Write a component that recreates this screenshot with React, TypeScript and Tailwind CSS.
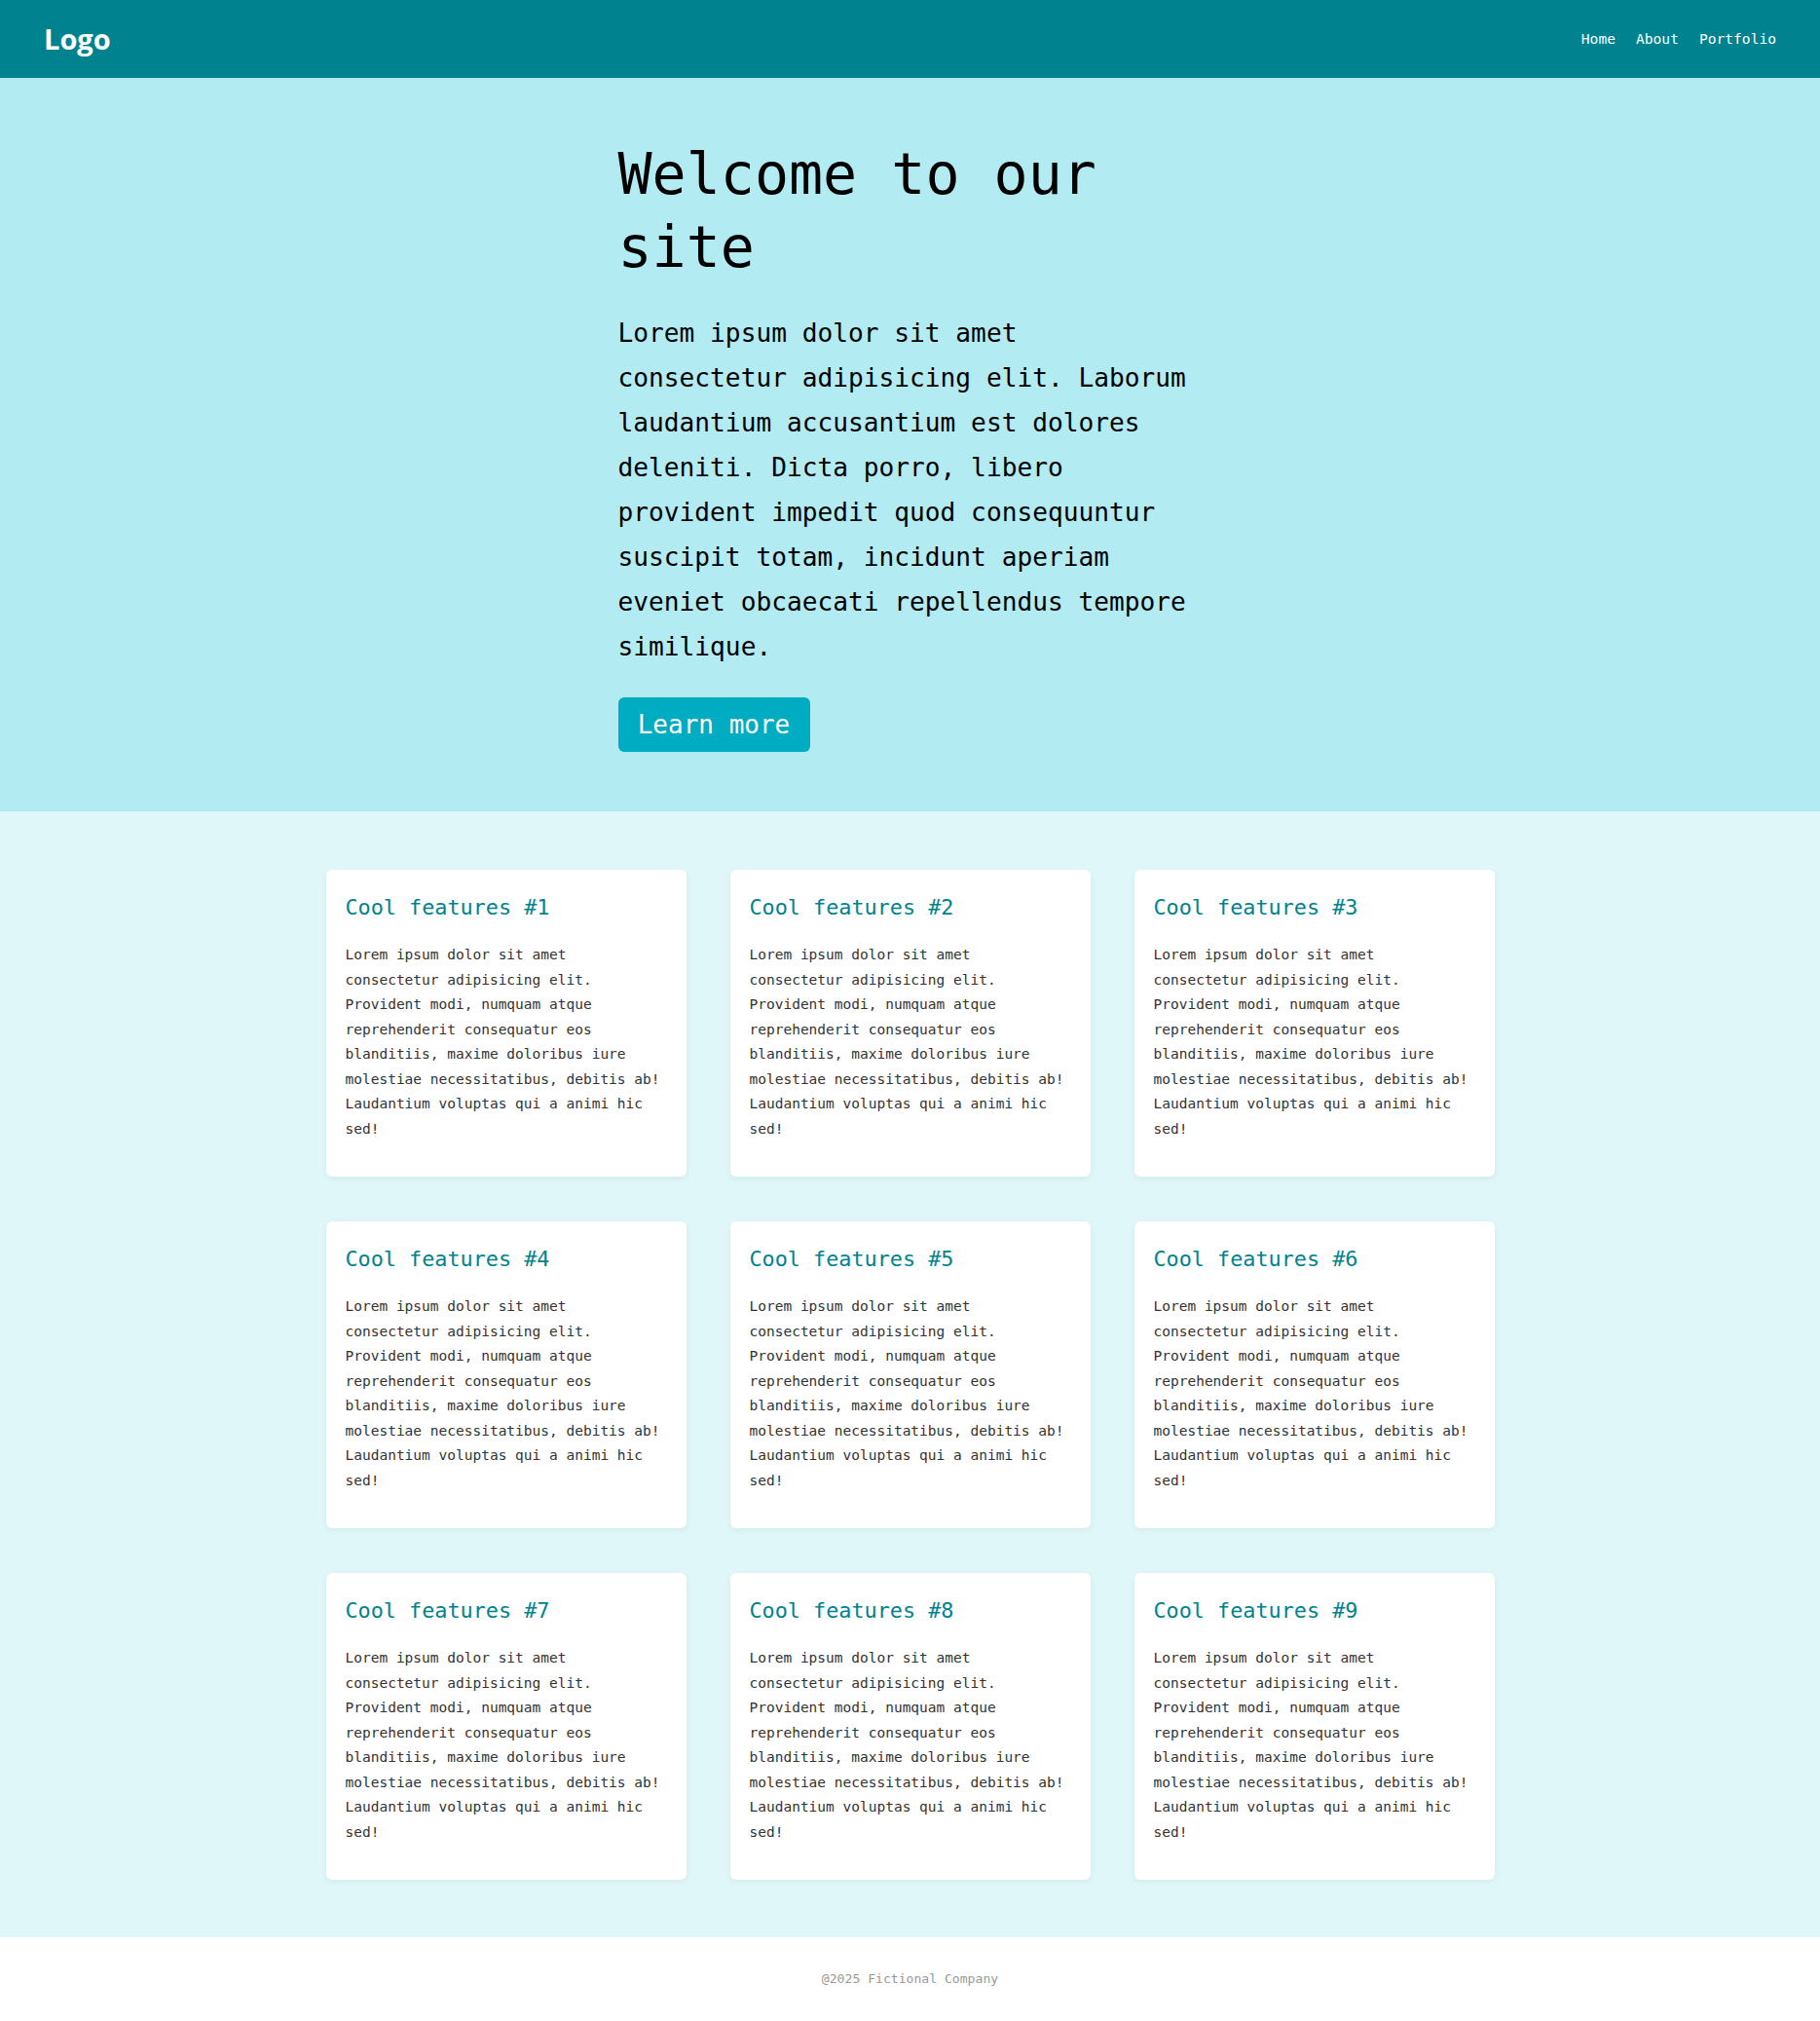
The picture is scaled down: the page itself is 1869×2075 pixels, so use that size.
const mono = "font-['DejaVu_Sans_Mono','Liberation_Mono',monospace]"

const lorem =
  'Lorem ipsum dolor sit amet consectetur adipisicing elit. Provident modi, numquam atque reprehenderit consequatur eos blanditiis, maxime doloribus iure molestiae necessitatibus, debitis ab! Laudantium voluptas qui a animi hic sed!'

function FeatureCard({ n }: { n: number }) {
  return (
    <div className="h-[315px] rounded-md bg-white px-5 pt-6 shadow-[0_2px_6px_rgba(0,0,0,0.06)]">
      <h2 className="text-[21.8px] leading-[30px] text-[#00838f]">Cool features #{n}</h2>
      <p className="mt-[21px] text-[14.5px] leading-[25.5px] text-[#333]">{lorem}</p>
    </div>
  )
}

export default function App() {
  return (
    <div className={`${mono} min-h-screen bg-white`}>
      <header className="flex h-20 items-center justify-between bg-[#00838f] pl-[45px] pr-[45px]">
        <span className="font-['Open_Sans','Lato',sans-serif] text-[29px] font-bold text-white">Logo</span>
        <nav className="flex gap-[21px] text-[14.6px] text-white">
          <a href="#">Home</a>
          <a href="#">About</a>
          <a href="#">Portfolio</a>
        </nav>
      </header>

      <section className="bg-[#b2ebf2] pt-[62px] pb-[61px]">
        <div className="mx-auto w-[600px]">
          <h1 className="w-[592px] text-[58.3px] leading-[75px] text-black">Welcome to our site</h1>
          <p className="mt-[27px] w-[592px] text-[26.2px] leading-[46px] text-black">
            Lorem ipsum dolor sit amet consectetur adipisicing elit. Laborum laudantium accusantium est dolores
            deleniti. Dicta porro, libero provident impedit quod consequuntur suscipit totam, incidunt aperiam
            eveniet obcaecati repellendus tempore similique.
          </p>
          <button className="mt-[29px] flex h-14 w-[197px] items-center justify-center rounded-md bg-[#00acc1] text-[26px] text-white">
            Learn more
          </button>
        </div>
      </section>

      <section className="bg-[#e0f7fa] pt-[60px] pb-[59px]">
        <div className="mx-auto grid w-[1200px] grid-cols-3 gap-x-[45px] gap-y-[46px]">
          {[1, 2, 3, 4, 5, 6, 7, 8, 9].map(n => (
            <FeatureCard key={n} n={n} />
          ))}
        </div>
      </section>

      <footer className="flex h-[86px] items-center justify-center bg-white text-[13.1px] text-[#999]">
        @2025 Fictional Company
      </footer>
    </div>
  )
}
